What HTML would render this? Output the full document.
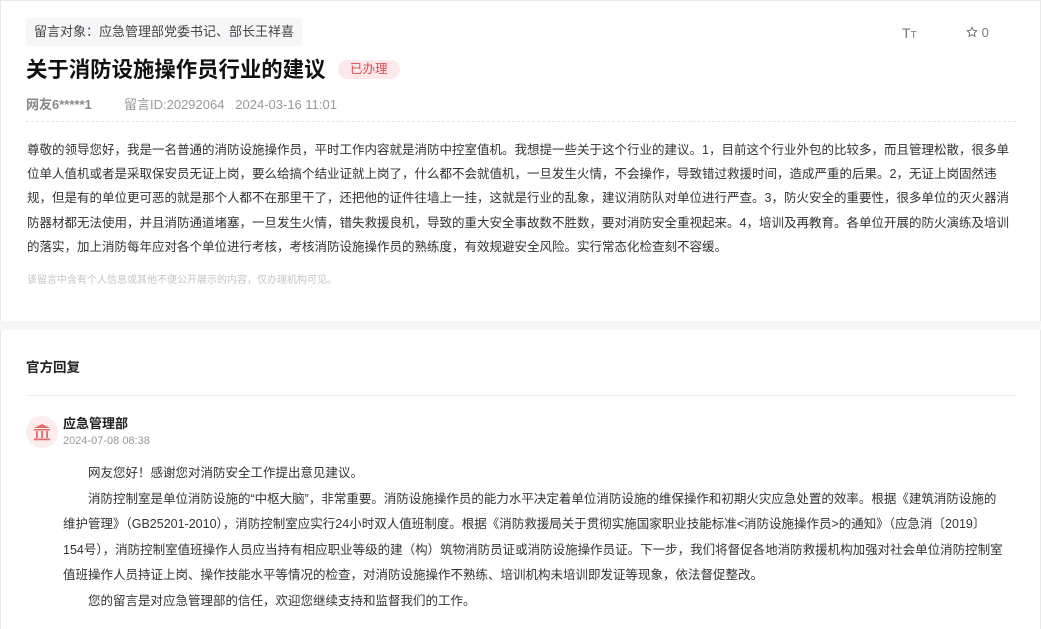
<!DOCTYPE html>
<html><head><meta charset="utf-8"><style>
*{margin:0;padding:0;box-sizing:border-box}
body{width:1041px;height:629px;overflow:hidden;background:#fff;font-family:"Liberation Sans","Noto Sans CJK SC",sans-serif;color:#333;position:relative}
.frame{position:absolute;left:0;top:0;width:1041px;height:629px;border:1px solid #e8e8e8;border-bottom:none}
.abs{position:absolute;white-space:nowrap}
.tag{left:26px;top:18px;height:28px;padding:0 8px;background:#f5f6f8;font-size:13px;line-height:28px;color:#444}
.title{left:26px;top:55px;font-size:21.4px;font-weight:bold;color:#111;line-height:30px}
.badge{left:338px;top:60px;height:19px;padding:0 12px;border-radius:10px;background:#fde8ea;color:#e0474f;font-size:12.5px;line-height:19px}
.meta{top:97px;font-size:13px;color:#999;line-height:16px}
.dash{left:26px;top:121px;width:990px;border-top:1px dashed #e6e6e6}
.body{left:27px;top:138px;font-size:12.5px;line-height:24.2px;color:#333}
.note{left:27px;top:271px;font-size:10px;color:#c4c4c4}
.band{left:0;top:321px;width:1041px;height:9px;background:#f5f6f8}
.h2{left:26px;top:356px;font-size:13.5px;font-weight:bold;color:#222}
.line{left:26px;top:395px;width:990px;border-top:1px solid #ececec}
.av{left:26px;top:416px;width:32px;height:32px;border-radius:50%;background:#fdecec}
.reply{left:63px;top:461px;font-size:12.5px;line-height:25.5px;color:#333}
</style></head><body>
<div class="frame"></div>
<div class="abs tag">留言对象：应急管理部党委书记、部长王祥喜</div>
<div class="abs title">关于消防设施操作员行业的建议</div>
<div class="abs badge">已办理</div>
<div class="abs" style="left:902px;top:25px;font-size:14px;color:#777">T<span style="font-size:10px">T</span></div>
<div class="abs" style="left:966px;top:25px;font-size:13px;color:#777"><svg width="12" height="12" viewBox="0 0 24 24" style="vertical-align:-1px"><path d="M12 2.5l2.9 6.1 6.6.8-4.9 4.6 1.3 6.6L12 17.3l-5.9 3.3 1.3-6.6-4.9-4.6 6.6-.8z" fill="none" stroke="#777" stroke-width="2"/></svg> 0</div>
<div class="abs meta" style="left:26px;font-weight:bold;color:#888">网友6*****1</div>
<div class="abs meta" style="left:124px">留言ID:20292064&nbsp;&nbsp;&nbsp;2024-03-16 11:01</div>
<div class="abs dash"></div>
<div class="abs body">尊敬的领导您好，我是一名普通的消防设施操作员，平时工作内容就是消防中控室值机。我想提一些关于这个行业的建议。1，目前这个行业外包的比较多，而且管理松散，很多单<br>位单人值机或者是采取保安员无证上岗，要么给搞个结业证就上岗了，什么都不会就值机，一旦发生火情，不会操作，导致错过救援时间，造成严重的后果。2，无证上岗固然违<br>规，但是有的单位更可恶的就是那个人都不在那里干了，还把他的证件往墙上一挂，这就是行业的乱象，建议消防队对单位进行严查。3，防火安全的重要性，很多单位的灭火器消<br>防器材都无法使用，并且消防通道堵塞，一旦发生火情，错失救援良机，导致的重大安全事故数不胜数，要对消防安全重视起来。4，培训及再教育。各单位开展的防火演练及培训<br>的落实，加上消防每年应对各个单位进行考核，考核消防设施操作员的熟练度，有效规避安全风险。实行常态化检查刻不容缓。</div>
<div class="abs note">该留言中含有个人信息或其他不便公开展示的内容，仅办理机构可见。</div>
<div class="abs band"></div>
<div class="abs h2">官方回复</div>
<div class="abs line"></div>
<div class="abs av"><svg width="32" height="32" viewBox="0 0 32 32"><g fill="#e46c6c"><path d="M16 8l8 4H8z"/><rect x="8" y="13" width="16" height="1.5"/><rect x="10" y="15" width="1.8" height="7"/><rect x="15.1" y="15" width="1.8" height="7"/><rect x="20.2" y="15" width="1.8" height="7"/><rect x="8" y="22.5" width="16" height="1.8"/></g></svg></div>
<div class="abs" style="left:63px;top:413px;font-size:13px;font-weight:bold;color:#222">应急管理部</div>
<div class="abs" style="left:63px;top:435px;font-size:11px;color:#999">2024-07-08 08:38</div>
<div class="abs reply">&emsp;&emsp;网友您好！感谢您对消防安全工作提出意见建议。<br>&emsp;&emsp;消防控制室是单位消防设施的“中枢大脑”，非常重要。消防设施操作员的能力水平决定着单位消防设施的维保操作和初期火灾应急处置的效率。根据《建筑消防设施的<br>维护管理》（GB25201-2010），消防控制室应实行24小时双人值班制度。根据《消防救援局关于贯彻实施国家职业技能标准&lt;消防设施操作员&gt;的通知》（应急消〔2019〕<br>154号），消防控制室值班操作人员应当持有相应职业等级的建（构）筑物消防员证或消防设施操作员证。下一步，我们将督促各地消防救援机构加强对社会单位消防控制室<br>值班操作人员持证上岗、操作技能水平等情况的检查，对消防设施操作不熟练、培训机构未培训即发证等现象，依法督促整改。<br>&emsp;&emsp;您的留言是对应急管理部的信任，欢迎您继续支持和监督我们的工作。</div>
</body></html>
